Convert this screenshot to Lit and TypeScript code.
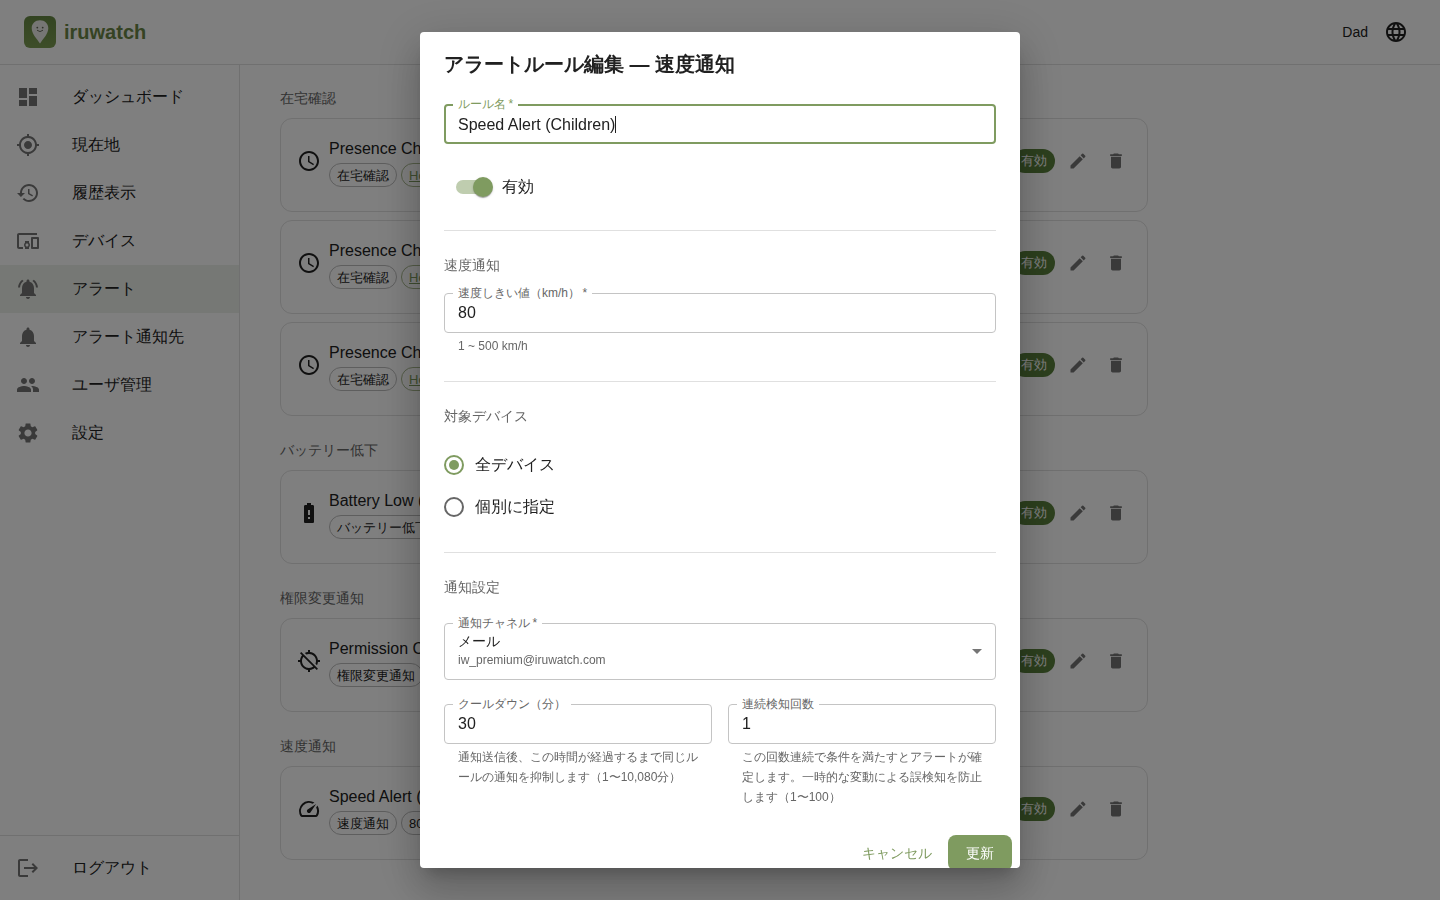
import { LitElement, html, css, svg, nothing } from "lit";
import { customElement, property, state, query } from "lit/decorators.js";
import { classMap } from "lit/directives/class-map.js";
import { live } from "lit/directives/live.js";
import { styleMap } from "lit/directives/style-map.js";

const ICONS: Record<string, string> = {
  dashboard: "M3 13h8V3H3v10zm0 8h8v-6H3v6zm10 0h8V11h-8v10zm0-18v6h8V3h-8z",
  location:
    "M12 8c-2.21 0-4 1.79-4 4s1.79 4 4 4 4-1.79 4-4-1.79-4-4-4zm8.94 3c-.46-4.17-3.77-7.48-7.94-7.94V1h-2v2.06C6.83 3.52 3.52 6.83 3.06 11H1v2h2.06c.46 4.17 3.77 7.48 7.94 7.94V23h2v-2.06c4.17-.46 7.48-3.77 7.94-7.94H23v-2h-2.06zM12 19c-3.87 0-7-3.13-7-7s3.13-7 7-7 7 3.13 7 7-3.13 7-7 7z",
  history:
    "M13 3c-4.97 0-9 4.03-9 9H1l3.89 3.89.07.14L9 12H6c0-3.87 3.13-7 7-7s7 3.13 7 7-3.13 7-7 7c-1.93 0-3.68-.79-4.94-2.06l-1.42 1.42C8.27 19.99 10.51 21 13 21c4.97 0 9-4.03 9-9s-4.03-9-9-9zm-1 5v5l4.28 2.54.72-1.21-3.5-2.08V8H12z",
  devices:
    "M3 6h18V4H3c-1.1 0-2 .9-2 2v12c0 1.1.9 2 2 2h4v-2H3V6zm10 6H9v1.78c-.61.55-1 1.33-1 2.22s.39 1.67 1 2.22V20h4v-1.78c.61-.55 1-1.34 1-2.22s-.39-1.67-1-2.22V12zm-2 5.5c-.83 0-1.5-.67-1.5-1.5s.67-1.5 1.5-1.5 1.5.67 1.5 1.5-.67 1.5-1.5 1.5zM22 8h-6c-.5 0-1 .5-1 1v10c0 .5.5 1 1 1h6c.5 0 1-.5 1-1V9c0-.5-.5-1-1-1zm-1 10h-4v-8h4v8z",
  bellActive:
    "M7.58 4.08L6.15 2.65C3.75 4.48 2.17 7.3 2.03 10.5h2c.15-2.65 1.51-4.97 3.55-6.42zm12.39 6.42h2c-.15-3.2-1.73-6.02-4.12-7.85l-1.42 1.43c2.02 1.45 3.39 3.77 3.54 6.42zM18 11c0-3.07-1.64-5.64-4.5-6.32V4c0-.83-.67-1.5-1.5-1.5s-1.5.67-1.5 1.5v.68C7.63 5.36 6 7.92 6 11v5l-2 2v1h16v-1l-2-2v-5zm-6 11c.14 0 .27-.01.4-.04.65-.14 1.18-.58 1.44-1.18.1-.24.15-.5.15-.78h-4c.01 1.1.9 2 2.01 2z",
  bell: "M12 22c1.1 0 2-.9 2-2h-4c0 1.1.89 2 2 2zm6-6v-5c0-3.07-1.64-5.64-4.5-6.32V4c0-.83-.67-1.5-1.5-1.5s-1.5.67-1.5 1.5v.68C7.63 5.36 6 7.92 6 11v5l-2 2v1h16v-1l-2-2z",
  people:
    "M16 11c1.66 0 2.99-1.34 2.99-3S17.66 5 16 5c-1.66 0-3 1.34-3 3s1.34 3 3 3zm-8 0c1.66 0 2.99-1.34 2.99-3S9.66 5 8 5C6.34 5 5 6.34 5 8s1.34 3 3 3zm0 2c-2.33 0-7 1.17-7 3.5V19h14v-2.5c0-2.33-4.67-3.5-7-3.5zm8 0c-.29 0-.62.02-.97.05 1.16.84 1.97 1.97 1.97 3.45V19h6v-2.5c0-2.33-4.67-3.5-7-3.5z",
  settings:
    "M19.14 12.94c.04-.3.06-.61.06-.94 0-.32-.02-.64-.07-.94l2.03-1.58c.18-.14.23-.41.12-.61l-1.92-3.32c-.12-.22-.37-.29-.59-.22l-2.39.96c-.5-.38-1.03-.7-1.62-.94l-.36-2.54c-.04-.24-.24-.41-.48-.41h-3.84c-.24 0-.43.17-.47.41l-.36 2.54c-.59.24-1.13.57-1.62.94l-2.39-.96c-.22-.08-.47 0-.59.22L2.74 8.87c-.12.21-.08.47.12.61l2.03 1.58c-.05.3-.09.63-.09.94s.02.64.07.94l-2.03 1.58c-.18.14-.23.41-.12.61l1.92 3.32c.12.22.37.29.59.22l2.39-.96c.5.38 1.03.7 1.62.94l.36 2.54c.05.24.24.41.48.41h3.84c.24 0 .44-.17.47-.41l.36-2.54c.59-.24 1.13-.56 1.62-.94l2.39.96c.22.08.47 0 .59-.22l1.92-3.32c.12-.22.07-.47-.12-.61l-2.01-1.58zM12 15.6c-1.98 0-3.6-1.62-3.6-3.6s1.62-3.6 3.6-3.6 3.6 1.62 3.6 3.6-1.62 3.6-3.6 3.6z",
  logout:
    "M17 7l-1.41 1.41L18.17 11H8v2h10.17l-2.58 2.58L17 17l5-5zM4 5h8V3H4c-1.1 0-2 .9-2 2v14c0 1.1.9 2 2 2h8v-2H4V5z",
  language:
    "M11.99 2C6.47 2 2 6.48 2 12s4.47 10 9.99 10C17.52 22 22 17.52 22 12S17.52 2 11.99 2zm6.93 6h-2.95c-.32-1.25-.78-2.45-1.38-3.56 1.84.63 3.37 1.91 4.33 3.56zM12 4.04c.83 1.2 1.48 2.53 1.91 3.96h-3.82c.43-1.43 1.08-2.76 1.91-3.96zM4.26 14C4.1 13.36 4 12.69 4 12s.1-1.36.26-2h3.38c-.08.66-.14 1.32-.14 2s.06 1.34.14 2H4.26zm.82 2h2.95c.32 1.25.78 2.45 1.38 3.56-1.84-.63-3.37-1.9-4.33-3.56zm2.95-8H5.08c.96-1.66 2.49-2.93 4.33-3.56C8.81 5.55 8.35 6.75 8.03 8zM12 19.96c-.83-1.2-1.48-2.53-1.91-3.96h3.82c-.43 1.43-1.08 2.76-1.91 3.96zM14.34 14H9.66c-.09-.66-.16-1.32-.16-2s.07-1.35.16-2h4.68c.09.65.16 1.32.16 2s-.07 1.34-.16 2zm.25 5.56c.6-1.11 1.06-2.31 1.38-3.56h2.95c-.96 1.65-2.49 2.93-4.33 3.56zM16.36 14c.08-.66.14-1.32.14-2s-.06-1.34-.14-2h3.38c.16.64.26 1.31.26 2s-.1 1.36-.26 2h-3.38z",
  clock:
    "M11.99 2C6.47 2 2 6.48 2 12s4.47 10 9.99 10C17.52 22 22 17.52 22 12S17.52 2 11.99 2zM12 20c-4.42 0-8-3.58-8-8s3.58-8 8-8 8 3.58 8 8-3.58 8-8 8zm.5-13H11v6l5.25 3.15.75-1.23-4.5-2.67z",
  battery:
    "M15.67 4H14V2h-4v2H8.33C7.6 4 7 4.6 7 5.33v15.33C7 21.4 7.6 22 8.33 22h7.33c.74 0 1.34-.6 1.34-1.33V5.33C17 4.6 16.4 4 15.67 4zM13 18h-2v-2h2v2zm0-4h-2V9h2v5z",
  gpsOff:
    "M20.94 11c-.46-4.17-3.77-7.48-7.94-7.94V1h-2v2.06c-1.13.12-2.19.46-3.16.97l1.5 1.5C10.16 5.19 11.06 5 12 5c3.87 0 7 3.13 7 7 0 .94-.19 1.84-.52 2.65l1.5 1.5c.5-.96.84-2.02.97-3.15H23v-2h-2.06zM3 4.27l2.04 2.04C3.97 7.62 3.25 9.23 3.06 11H1v2h2.06c.46 4.17 3.77 7.48 7.94 7.94V23h2v-2.06c1.77-.2 3.38-.91 4.69-1.98L19.73 21 21 19.73 4.27 3 3 4.27zm13.27 13.27C15.09 18.45 13.61 19 12 19c-3.87 0-7-3.13-7-7 0-1.61.55-3.09 1.46-4.27l9.81 9.81z",
  speed:
    "m20.38 8.57-1.23 1.85a8 8 0 0 1-.22 7.58H5.07A8 8 0 0 1 15.58 6.85l1.85-1.23A10 10 0 0 0 3.35 19a2 2 0 0 0 1.72 1h13.85a2 2 0 0 0 1.74-1 10 10 0 0 0-.27-10.44zm-9.79 6.84a2 2 0 0 0 2.83 0l5.66-8.49-8.49 5.66a2 2 0 0 0 0 2.83z",
  edit: "M3 17.25V21h3.75L17.81 9.94l-3.75-3.75L3 17.25zM20.71 7.04c.39-.39.39-1.02 0-1.41l-2.34-2.34a.9959.9959 0 0 0-1.41 0l-1.83 1.83 3.75 3.75 1.83-1.83z",
  trash: "M6 19c0 1.1.9 2 2 2h8c1.1 0 2-.9 2-2V7H6v12zM19 4h-3.5l-1-1h-5l-1 1H5v2h14V4z",
  arrowDown: "m7 10 5 5 5-5z",
};

const icon = (name: string) =>
  html`<svg class="icon" viewBox="0 0 24 24" aria-hidden="true">${svg`<path d=${ICONS[name]}></path>`}</svg>`;

const base = css`
  * {
    box-sizing: border-box;
  }
  .icon {
    display: block;
    width: 24px;
    height: 24px;
    fill: currentColor;
    flex: none;
  }
  button,
  input,
  select {
    font: inherit;
    color: inherit;
    margin: 0;
  }
  button {
    border: 0;
    background: none;
    cursor: pointer;
  }
`;

interface Chip {
  text: string;
  href?: string;
}
interface Rule {
  name: string;
  icon: string;
  chips: Chip[];
}

const PRESENCE: Rule = {
  name: "Presence Check",
  icon: "clock",
  chips: [{ text: "在宅確認" }, { text: "Home", href: "#home" }],
};

const GROUPS: { title: string; rules: Rule[] }[] = [
  { title: "在宅確認", rules: [PRESENCE, PRESENCE, PRESENCE] },
  {
    title: "バッテリー低下",
    rules: [{ name: "Battery Low (All)", icon: "battery", chips: [{ text: "バッテリー低下" }] }],
  },
  {
    title: "権限変更通知",
    rules: [{ name: "Permission Change", icon: "gpsOff", chips: [{ text: "権限変更通知" }] }],
  },
  {
    title: "速度通知",
    rules: [
      { name: "Speed Alert (Children)", icon: "speed", chips: [{ text: "速度通知" }, { text: "80 km/h" }] },
    ],
  },
];

const NAV = [
  { id: "dashboard", label: "ダッシュボード", icon: "dashboard" },
  { id: "location", label: "現在地", icon: "location" },
  { id: "history", label: "履歴表示", icon: "history" },
  { id: "devices", label: "デバイス", icon: "devices" },
  { id: "alerts", label: "アラート", icon: "bellActive" },
  { id: "channels", label: "アラート通知先", icon: "bell" },
  { id: "users", label: "ユーザ管理", icon: "people" },
  { id: "settings", label: "設定", icon: "settings" },
];

@customElement("rule-card")
export class RuleCard extends LitElement {
  @property({ attribute: false }) rule!: Rule;

  static styles = [
    base,
    css`
      :host {
        display: block;
      }
      .card {
        display: flex;
        align-items: center;
        gap: 8px;
        padding: 16px 16px 24px;
        border: 1px solid #e0e0e0;
        border-radius: 12px;
      }
      .body {
        flex: 1;
        min-width: 0;
      }
      .name {
        font-size: 16px;
        line-height: 28px;
      }
      .chips {
        display: flex;
        gap: 4px;
      }
      .chip {
        height: 24px;
        padding: 0 7px;
        border: 1px solid #bdbdbd;
        border-radius: 12px;
        font-size: 13px;
        line-height: 23px;
        color: inherit;
      }
      .link {
        color: #7e9b60;
        border-color: #a9b88f;
      }
      .status {
        height: 24px;
        padding: 0 8px;
        border-radius: 12px;
        background: #5a803c;
        color: #fff;
        font-size: 13px;
        line-height: 24px;
      }
      .action {
        display: flex;
        padding: 5px;
        color: #757575;
      }
      .action .icon {
        width: 20px;
        height: 20px;
      }
    `,
  ];

  render() {
    return html`
      <article class="card">
        ${icon(this.rule.icon)}
        <div class="body">
          <div class="name">${this.rule.name}</div>
          <div class="chips">
            ${this.rule.chips.map((c) =>
              c.href
                ? html`<a class="chip link" href=${c.href}>${c.text}</a>`
                : html`<span class="chip">${c.text}</span>`
            )}
          </div>
        </div>
        <span class="status">有効</span>
        <button class="action" aria-label="編集">${icon("edit")}</button>
        <button class="action" aria-label="削除">${icon("trash")}</button>
      </article>
    `;
  }
}

@customElement("rule-dialog")
export class RuleDialog extends LitElement {
  @state() private name = "Speed Alert (Children)";
  @state() private target = "all";
  @state() private caretX = 0;
  @query("#name") private nameInput!: HTMLInputElement;

  static styles = [
    base,
    css`
      :host {
        position: fixed;
        inset: 0;
        display: flex;
        align-items: center;
        justify-content: center;
        padding: 32px;
        background: rgba(0, 0, 0, 0.5);
        --green: #7f9b60;
        --muted: #666;
      }
      .dialog {
        width: 100%;
        max-width: 600px;
        max-height: 100%;
        overflow: hidden;
        border-radius: 4px;
        background: #fff;
        box-shadow: 0 11px 15px -7px rgba(0, 0, 0, 0.2), 0 24px 38px 3px rgba(0, 0, 0, 0.14),
          0 9px 46px 8px rgba(0, 0, 0, 0.12);
      }
      .title {
        margin: 0;
        padding: 16px 24px;
        font-size: 20px;
        line-height: 32px;
        font-weight: 700;
      }
      .content {
        display: flex;
        flex-direction: column;
        gap: 24px;
        padding: 8px 24px 19px;
      }
      .rule {
        width: 100%;
        height: 1px;
        margin: 0;
        border: 0;
        background: #e0e0e0;
      }
      .group {
        display: flex;
        flex-direction: column;
        gap: 16px;
        margin: 0;
        padding: 0;
        border: 0;
        min-width: 0;
      }
      .heading {
        margin: 0;
        padding: 0 0 2px;
        font-size: 14px;
        line-height: 20px;
        font-weight: 400;
        color: var(--muted);
      }
      .field {
        position: relative;
        min-width: 0;
      }
      .label {
        position: absolute;
        top: -10px;
        left: 9px;
        padding: 0 5px;
        background: #fff;
        font-size: 12px;
        line-height: 20px;
        white-space: nowrap;
        color: var(--muted);
      }
      .input {
        display: block;
        width: 100%;
        height: 40px;
        padding: 0 13px;
        border: 1px solid #c4c4c4;
        border-radius: 4px;
        outline: 0;
        background: #fff;
        font-size: 16px;
        appearance: textfield;
      }
      .input:focus {
        padding: 1px 12px 0;
        border: 2px solid var(--green);
      }
      .input:focus + .label {
        color: var(--green);
      }
      .drawn-caret {
        caret-color: transparent;
      }
      .caret {
        position: absolute;
        top: 12px;
        width: 1px;
        height: 17px;
        background: #212121;
        visibility: hidden;
      }
      .input:focus ~ .caret {
        visibility: visible;
      }
      .helper {
        margin: 3px 14px 1px;
        font-size: 12px;
        line-height: 20px;
        color: var(--muted);
      }
      .switch {
        display: flex;
        align-items: center;
        gap: 12px;
        height: 38px;
        padding-left: 12px;
        font-size: 16px;
      }
      .toggle {
        appearance: none;
        position: relative;
        width: 34px;
        height: 14px;
        border-radius: 7px;
        background: #9e9e9e;
        cursor: pointer;
      }
      .toggle::before {
        content: "";
        position: absolute;
        top: -3px;
        left: -3px;
        width: 20px;
        height: 20px;
        border-radius: 50%;
        background: #fff;
        box-shadow: 0 2px 1px -1px rgba(0, 0, 0, 0.2), 0 1px 1px rgba(0, 0, 0, 0.14),
          0 1px 3px rgba(0, 0, 0, 0.12);
      }
      .toggle:checked {
        background: #bfcdaf;
      }
      .toggle:checked::before {
        left: 17px;
        background: var(--green);
      }
      .option {
        display: flex;
        align-items: center;
        gap: 11px;
        height: 42px;
        font-size: 16px;
      }
      .radio {
        appearance: none;
        display: grid;
        place-items: center;
        width: 20px;
        height: 20px;
        border: 2px solid var(--muted);
        border-radius: 50%;
        cursor: pointer;
      }
      .radio:checked {
        border-color: var(--green);
      }
      .radio:checked::before {
        content: "";
        width: 10px;
        height: 10px;
        border-radius: 50%;
        background: var(--green);
      }
      .picker {
        display: grid;
        align-items: center;
      }
      .picker > * {
        grid-area: 1 / 1;
      }
      .select {
        appearance: none;
        width: 100%;
        height: 57px;
        padding: 7px 32px 28px 13px;
        border: 1px solid #c4c4c4;
        border-radius: 4px;
        background: #fff;
        font-size: 14px;
        line-height: 20px;
      }
      .detail {
        align-self: end;
        padding: 0 14px 12px;
        font-size: 12px;
        line-height: 16px;
        color: var(--muted);
        pointer-events: none;
      }
      .arrow {
        justify-self: end;
        padding: 0 7px 1px 0;
        color: #757575;
        pointer-events: none;
      }
      .pair {
        display: grid;
        grid-template-columns: 1fr 1fr;
        gap: 16px;
      }
      .actions {
        display: flex;
        justify-content: flex-end;
        gap: 8px;
        padding: 8px;
      }
      .btn {
        min-width: 64px;
        height: 36px;
        padding: 0 8px;
        border-radius: 8px;
        font-size: 14px;
        line-height: 20px;
        color: var(--green);
      }
      .primary {
        background: var(--green);
        color: #fff;
      }
    `,
  ];

  firstUpdated() {
    this.nameInput.focus();
    this.nameInput.setSelectionRange(this.name.length, this.name.length);
    this.placeCaret();
  }

  private placeCaret() {
    const ctx = document.createElement("canvas").getContext("2d")!;
    const style = getComputedStyle(this.nameInput);
    ctx.font = `${style.fontSize} ${style.fontFamily}`;
    const before = this.nameInput.value.slice(0, this.nameInput.selectionStart ?? 0);
    this.caretX = 13 + Math.round(ctx.measureText(before).width);
  }

  private numberField(id: string, label: string, value: number, helper: string) {
    return html`
      <div class="field">
        <input class="input" id=${id} type="number" value=${value} aria-describedby=${`${id}-help`} />
        <label class="label" for=${id}>${label}</label>
        <p class="helper" id=${`${id}-help`}>${helper}</p>
      </div>
    `;
  }

  private option(value: string, label: string) {
    return html`
      <label class="option">
        <input
          class="radio"
          type="radio"
          name="target"
          value=${value}
          .checked=${live(this.target === value)}
          @change=${() => (this.target = value)}
        />
        ${label}
      </label>
    `;
  }

  render() {
    return html`
      <div class="dialog" role="dialog" aria-modal="true" aria-labelledby="title">
        <h2 class="title" id="title">アラートルール編集 — 速度通知</h2>
        <div class="content">
          <div class="field">
            <input
              class="input drawn-caret"
              id="name"
              type="text"
              required
              .value=${this.name}
              @input=${(e: Event) => (this.name = (e.target as HTMLInputElement).value)}
              @select=${this.placeCaret}
              @keyup=${this.placeCaret}
              @click=${this.placeCaret}
            />
            <label class="label" for="name">ルール名&thinsp;*</label>
            <span class="caret" style=${styleMap({ left: `${this.caretX}px` })}></span>
          </div>
          <label class="switch"><input class="toggle" type="checkbox" checked />有効</label>
          <hr class="rule" />
          <section class="group">
            <h3 class="heading">速度通知</h3>
            ${this.numberField("threshold", "速度しきい値（km/h）\u2009*", 80, "1 ~ 500 km/h")}
          </section>
          <hr class="rule" />
          <section class="group" role="radiogroup" aria-labelledby="target-title">
            <h3 class="heading" id="target-title">対象デバイス</h3>
            <div>${this.option("all", "全デバイス")}${this.option("some", "個別に指定")}</div>
          </section>
          <hr class="rule" />
          <h3 class="heading">通知設定</h3>
          <div class="field picker">
            <select class="select" id="channel">
              <option>メール</option>
            </select>
            <label class="label" for="channel">通知チャネル&thinsp;*</label>
            <span class="detail">iw_premium@iruwatch.com</span>
            <span class="arrow">${icon("arrowDown")}</span>
          </div>
          <div class="pair">
            ${this.numberField(
              "cooldown",
              "クールダウン（分）",
              30,
              "通知送信後、この時間が経過するまで同じルールの通知を抑制します（1〜10,080分）"
            )}
            ${this.numberField(
              "count",
              "連続検知回数",
              1,
              "この回数連続で条件を満たすとアラートが確定します。一時的な変動による誤検知を防止します（1〜100）"
            )}
          </div>
        </div>
        <div class="actions">
          <button class="btn">キャンセル</button>
          <button class="btn primary">更新</button>
        </div>
      </div>
    `;
  }
}

@customElement("app-root")
export class AppRoot extends LitElement {
  @state() private current = "alerts";

  static styles = [
    base,
    css`
      :host {
        display: flex;
        flex-direction: column;
        height: 100vh;
        overflow: hidden;
        background: #fff;
        color: #212121;
        font-family: "Liberation Sans", sans-serif;
        font-size: 16px;
        line-height: 24px;
      }
      .header {
        display: flex;
        align-items: center;
        gap: 8px;
        height: 65px;
        padding: 0 24px;
        border-bottom: 1px solid #e0e0e0;
        flex: none;
      }
      .logo {
        width: 32px;
        height: 32px;
      }
      .brand {
        flex: 1;
        font-size: 20px;
        font-weight: 700;
        color: #6b8746;
      }
      .user {
        font-size: 14px;
      }
      .lang {
        display: flex;
        padding: 8px;
      }
      .shell {
        display: flex;
        flex: 1;
        min-height: 0;
      }
      .sidebar {
        display: flex;
        flex-direction: column;
        justify-content: space-between;
        width: 240px;
        border-right: 1px solid #e0e0e0;
        flex: none;
      }
      .nav {
        padding: 8px 0;
      }
      .bottom {
        border-top: 1px solid #e0e0e0;
      }
      .item {
        display: flex;
        align-items: center;
        gap: 32px;
        height: 48px;
        padding: 0 16px;
        color: inherit;
        text-decoration: none;
      }
      .item .icon {
        color: #757575;
      }
      .selected {
        background: #edf1ea;
      }
      .main {
        flex: 1;
        min-width: 0;
        padding: 23px 24px;
        overflow: hidden;
      }
      .container {
        display: flex;
        flex-direction: column;
        gap: 24px;
        max-width: 900px;
        padding: 0 16px;
      }
      .section {
        display: flex;
        flex-direction: column;
        gap: 8px;
      }
      .caption {
        margin: 0;
        padding: 0 0 2px;
        font-size: 14px;
        line-height: 20px;
        font-weight: 400;
        color: #666;
      }
    `,
  ];

  private navItem(item: { id: string; label: string; icon: string }) {
    const selected = item.id === this.current;
    return html`<a
      class=${classMap({ item: true, selected })}
      href=${`#${item.id}`}
      aria-current=${selected ? "page" : nothing}
      >${icon(item.icon)}<span>${item.label}</span></a
    >`;
  }

  render() {
    return html`
      <header class="header">
        <svg class="logo" viewBox="0 0 32 32" aria-hidden="true">
          <defs>
            <linearGradient id="leaf" x1="0" y1="0" x2="0" y2="1">
              <stop offset="0" stop-color="#668843"></stop>
              <stop offset="1" stop-color="#7c9c52"></stop>
            </linearGradient>
          </defs>
          <rect width="32" height="32" rx="6" fill="url(#leaf)"></rect>
          <path
            d="M16 4.200C11.200 4.200 7.700 7.600 7.700 12.200C7.700 18 12.800 22.400 16 27.600C19.200 22.400 24.300 18 24.300 12.200C24.300 7.600 20.800 4.200 16 4.200Z"
            fill="#ecece8"
          ></path>
          <circle cx="13.300" cy="11.600" r="0.900" fill="#5d6152"></circle>
          <circle cx="18.700" cy="11.600" r="0.900" fill="#5d6152"></circle>
          <path d="M13 14.200Q16 17 19 14.200" fill="none" stroke="#5d6152" stroke-width="0.900"></path>
        </svg>
        <span class="brand">iruwatch</span>
        <span class="user">Dad</span>
        <button class="lang" aria-label="言語">${icon("language")}</button>
      </header>
      <div class="shell">
        <aside class="sidebar">
          <nav class="nav">${NAV.map((i) => this.navItem(i))}</nav>
          <div class="nav bottom">${this.navItem({ id: "logout", label: "ログアウト", icon: "logout" })}</div>
        </aside>
        <main class="main">
          <div class="container">
            ${GROUPS.map(
              (g) => html`<section class="section">
                <h2 class="caption">${g.title}</h2>
                ${g.rules.map((r) => html`<rule-card .rule=${r}></rule-card>`)}
              </section>`
            )}
          </div>
        </main>
      </div>
      <rule-dialog></rule-dialog>
    `;
  }
}
